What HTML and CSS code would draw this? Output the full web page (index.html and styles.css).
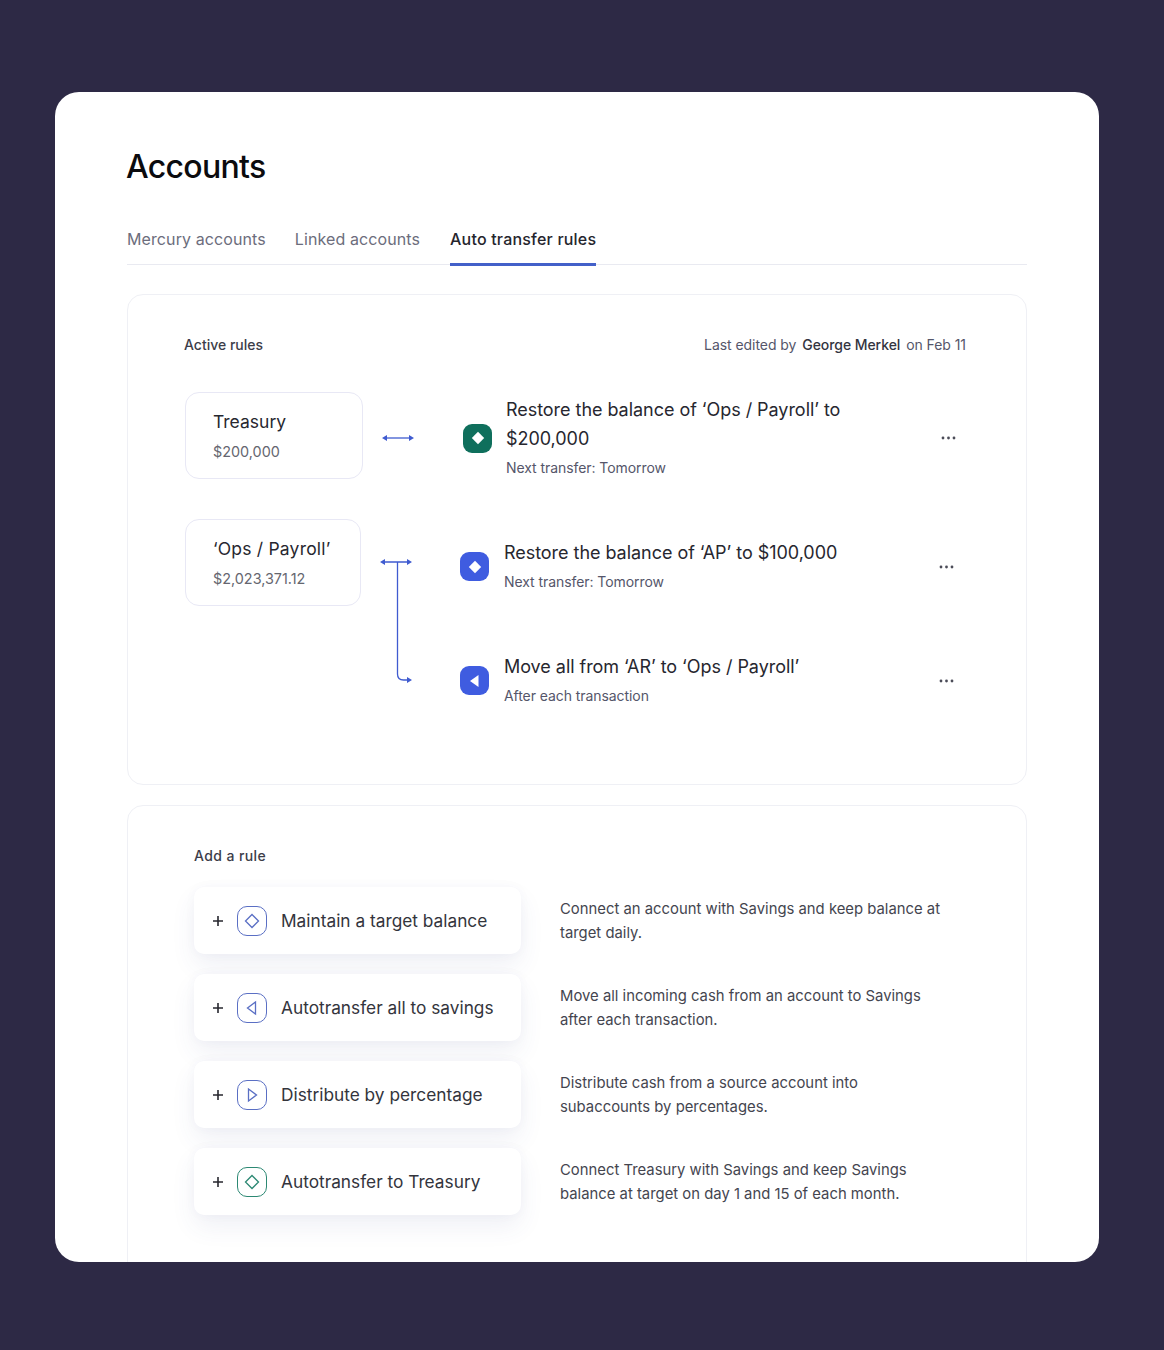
FILE: index.html
```html
<!DOCTYPE html>
<html lang="en">
<head>
  <meta charset="UTF-8" />
  <meta name="viewport" content="width=device-width, initial-scale=1.0"/>
  <title>Accounts</title>
  <link rel="stylesheet" href="styles.css">
</head>
<body>

  <div class="container">
    <h1>Accounts</h1>

    <div class="tabs">
      <a class="tab">Mercury accounts</a>
      <a class="tab">Linked accounts</a>
      <a class="tab active">Auto transfer rules</a>
    </div>

    <div class="panel active-rules">
      <div class="panel-head">
        <span class="panel-title">Active rules</span>
        <span class="edited">Last edited by <b>George Merkel</b> on Feb 11</span>
      </div>

      <div class="group group-treasury">
        <div class="account">
          <div class="account-name">Treasury</div>
          <div class="account-amount">$200,000</div>
        </div>
        <svg class="link-single" width="34" height="10" viewBox="0 0 34 10">
          <path d="M4 5H30" stroke="#3f5bd0" stroke-width="1.3" fill="none"/>
          <path d="M1 5l5-3v6zM33 5l-5-3v6z" fill="#3f5bd0"/>
        </svg>
        <div class="rule">
          <span class="rule-icon green">
            <svg width="14" height="14" viewBox="0 0 14 14"><path d="M7 .8L13.2 7 7 13.2.8 7z" fill="#fff"/></svg>
          </span>
          <div class="rule-text">
            <div class="rule-title">Restore the balance of ‘Ops / Payroll’ to $200,000</div>
            <div class="rule-sub">Next transfer: Tomorrow</div>
          </div>
          <svg class="dots" width="16" height="4" viewBox="0 0 16 4"><circle cx="2" cy="2" r="1.4"/><circle cx="7.500" cy="2" r="1.4"/><circle cx="13" cy="2" r="1.4"/></svg>
        </div>
      </div>

      <div class="group group-ops">
        <div class="account">
          <div class="account-name">‘Ops / Payroll’</div>
          <div class="account-amount">$2,023,371.12</div>
        </div>
        <svg class="link-branch" width="34" height="128" viewBox="0 0 34 128">
          <path d="M4 5H30M18.500 5V117q0 6 6 6h6" stroke="#3f5bd0" stroke-width="1.3" fill="none"/>
          <path d="M1 5l5-3v6zM33 5l-5-3v6zM33 123l-5-3v6z" fill="#3f5bd0"/>
        </svg>
        <div class="rule-list">
          <div class="rule">
            <span class="rule-icon blue">
              <svg width="14" height="14" viewBox="0 0 14 14"><path d="M7 .8L13.2 7 7 13.2.8 7z" fill="#fff"/></svg>
            </span>
            <div class="rule-text">
              <div class="rule-title">Restore the balance of ‘AP’ to $100,000</div>
              <div class="rule-sub">Next transfer: Tomorrow</div>
            </div>
            <svg class="dots" width="16" height="4" viewBox="0 0 16 4"><circle cx="2" cy="2" r="1.4"/><circle cx="7.500" cy="2" r="1.4"/><circle cx="13" cy="2" r="1.4"/></svg>
          </div>
          <div class="rule">
            <span class="rule-icon blue">
              <svg width="14" height="14" viewBox="0 0 14 14"><path d="M10.500 1V13L2 7z" fill="#fff"/></svg>
            </span>
            <div class="rule-text">
              <div class="rule-title">Move all from ‘AR’ to ‘Ops / Payroll’</div>
              <div class="rule-sub">After each transaction</div>
            </div>
            <svg class="dots" width="16" height="4" viewBox="0 0 16 4"><circle cx="2" cy="2" r="1.4"/><circle cx="7.500" cy="2" r="1.4"/><circle cx="13" cy="2" r="1.4"/></svg>
          </div>
        </div>
      </div>
    </div>

    <div class="panel add-rules">
      <div class="panel-title">Add a rule</div>

      <div class="option">
        <div class="option-btn">
          <svg class="plus" width="12" height="12" viewBox="0 0 12 12"><path d="M6 1V11M1 6H11"/></svg>
          <span class="option-icon">
            <svg width="16" height="16" viewBox="0 0 16 16"><path d="M8 1.500L14.500 8 8 14.500 1.500 8z"/></svg>
          </span>
          <span class="option-name">Maintain a target balance</span>
        </div>
        <p class="option-desc">Connect an account with Savings and keep balance at target daily.</p>
      </div>

      <div class="option">
        <div class="option-btn">
          <svg class="plus" width="12" height="12" viewBox="0 0 12 12"><path d="M6 1V11M1 6H11"/></svg>
          <span class="option-icon">
            <svg width="16" height="16" viewBox="0 0 16 16"><path d="M11.500 2V14L3.500 8z"/></svg>
          </span>
          <span class="option-name">Autotransfer all to savings</span>
        </div>
        <p class="option-desc">Move all incoming cash from an account to Savings after each transaction.</p>
      </div>

      <div class="option">
        <div class="option-btn">
          <svg class="plus" width="12" height="12" viewBox="0 0 12 12"><path d="M6 1V11M1 6H11"/></svg>
          <span class="option-icon">
            <svg width="16" height="16" viewBox="0 0 16 16"><path d="M4.500 2V14L12.500 8z"/></svg>
          </span>
          <span class="option-name">Distribute by percentage</span>
        </div>
        <p class="option-desc">Distribute cash from a source account into subaccounts by percentages.</p>
      </div>

      <div class="option">
        <div class="option-btn">
          <svg class="plus" width="12" height="12" viewBox="0 0 12 12"><path d="M6 1V11M1 6H11"/></svg>
          <span class="option-icon green">
            <svg width="16" height="16" viewBox="0 0 16 16"><path d="M8 1.500L14.500 8 8 14.500 1.500 8z"/></svg>
          </span>
          <span class="option-name">Autotransfer to Treasury</span>
        </div>
        <p class="option-desc">Connect Treasury with Savings and keep Savings balance at target on day 1 and 15 of each month.</p>
      </div>
    </div>
  </div>

</body>
</html>
```

FILE: styles.css
```css
* {
  box-sizing: border-box;
}

body {
  font-family: "Inter", "Liberation Sans", sans-serif;
  background: #2d2945;
  margin: 0;
  height: 1350px;
  padding: 92px 65px 88px 55px;
  color: #25252d;
}

.container {
  width: 1044px;
  height: 1170px;
  overflow: hidden;
  border-radius: 24px;
  background: white;
  padding: 56px 72px 0;
}

h1 {
  margin: 0 0 0 -1px;
  font-size: 32px;
  line-height: 38px;
  font-weight: 500;
  letter-spacing: -0.7px;
  color: #0b0b0e;
}

.tabs {
  display: flex;
  gap: 29px;
  margin-top: 38px;
  height: 41px;
  border-bottom: 1px solid #e9eaf1;
}

.tab {
  font-size: 16px;
  line-height: 24px;
  padding-top: 3px;
  color: #6c6d7c;
  letter-spacing: 0.1px;
}

.tab.active {
  color: #25252d;
  font-weight: 500;
  height: 42px;
  margin-left: 1px;
  letter-spacing: 0.2px;
  border-bottom: 3px solid #4360c9;
}

.panel {
  border: 1px solid #eff0f5;
  border-radius: 16px;
}

/* active rules */
.active-rules {
  height: 491px;
  margin-top: 29px;
  padding: 40px 60px 0 57px;
}

.panel-head {
  display: flex;
  justify-content: space-between;
  align-items: baseline;
  height: 20px;
}

.panel-title {
  font-size: 14px;
  line-height: 20px;
  font-weight: 500;
  color: #3c3d49;
}

.active-rules .panel-title {
  margin-left: -1px;
}

.edited {
  font-size: 14px;
  line-height: 20px;
  letter-spacing: -0.06px;
  color: #55566a;
}

.edited b {
  font-weight: 500;
  color: #33343f;
  margin: 0 2px;
}

.group {
  display: flex;
  align-items: flex-start;
}

.group-treasury {
  margin-top: 37px;
}

.group-ops {
  margin-top: 39px;
}

.account {
  flex: none;
  width: 178px;
  height: 87px;
  padding: 17px 27px;
  border: 1.5px solid #e8e8f5;
  border-radius: 14px;
}

.group-ops .account {
  width: 176px;
}

.group-ops .account-name {
  letter-spacing: 0.2px;
}

.account-name {
  font-size: 17.500px;
  line-height: 24px;
  white-space: nowrap;
  color: #27272f;
}

.account-amount {
  margin-top: 8px;
  font-size: 14.400px;
  line-height: 20px;
  color: #65666f;
}

.link-single {
  flex: none;
  margin: 41px 48px 0 18px;
}

.link-branch {
  flex: none;
  margin: 38px 47px 0 18px;
}

.rule {
  display: flex;
  align-items: center;
  flex: 1;
}

.group-treasury .rule {
  margin-top: 4px;
}

.rule-list {
  flex: 1;
  display: flex;
  flex-direction: column;
  gap: 59px;
  margin-top: 20px;
}

.rule-icon {
  flex: none;
  display: flex;
  align-items: center;
  justify-content: center;
  width: 29px;
  height: 29px;
  border-radius: 9px;
}

.rule-icon.green {
  background: #0f6f5c;
}

.rule-icon.blue {
  background: #3f5ce0;
}

.rule-text {
  flex: 1;
  margin-left: 15px;
}

.group-treasury .rule-text {
  margin-left: 14px;
}

.rule-title {
  width: 350px;
  font-size: 18px;
  line-height: 28px;
  letter-spacing: -0.04px;
  color: #27272f;
}

.group-treasury .rule-title {
  line-height: 28.500px;
}

.rule-sub {
  margin-top: 3px;
  font-size: 14px;
  line-height: 24px;
  letter-spacing: -0.07px;
  color: #55566a;
}

.dots {
  flex: none;
  margin-right: 11px;
  fill: #4b4c58;
}

.group-treasury .dots {
  margin-right: 9px;
}

/* add a rule */
.add-rules {
  height: 480px;
  margin-top: 20px;
  padding: 40px 66px 0 66px;
}

.add-rules .panel-title {
  margin-bottom: 21px;
  letter-spacing: 0.4px;
}

.option {
  display: flex;
  align-items: center;
  height: 67px;
  margin-bottom: 20px;
}

.option-btn {
  flex: none;
  display: flex;
  align-items: center;
  width: 327px;
  height: 67px;
  padding-left: 18px;
  border-radius: 10px;
  background: white;
  box-shadow: 0 12px 24px rgba(70, 75, 140, 0.08), 0 0 12px rgba(70, 75, 140, 0.03);
}

.plus {
  flex: none;
  stroke: #27272f;
  stroke-width: 1.6;
  fill: none;
}

.option-icon {
  flex: none;
  display: flex;
  align-items: center;
  justify-content: center;
  width: 30px;
  height: 30px;
  margin-left: 13px;
  border: 1.5px solid #5a6fc4;
  border-radius: 10px;
}

.option-icon svg {
  fill: none;
  stroke: #5a6fc4;
  stroke-width: 1.3;
}

.option-icon.green {
  border-color: #2c8873;
}

.option-icon.green svg {
  stroke: #2c8873;
}

.option-name {
  margin-left: 14px;
  font-size: 17.300px;
  color: #33343c;
}

.option-desc {
  width: 388px;
  margin: 1px 0 0 39px;
  font-size: 14.850px;
  line-height: 24.500px;
  color: #44454f;
}
```
